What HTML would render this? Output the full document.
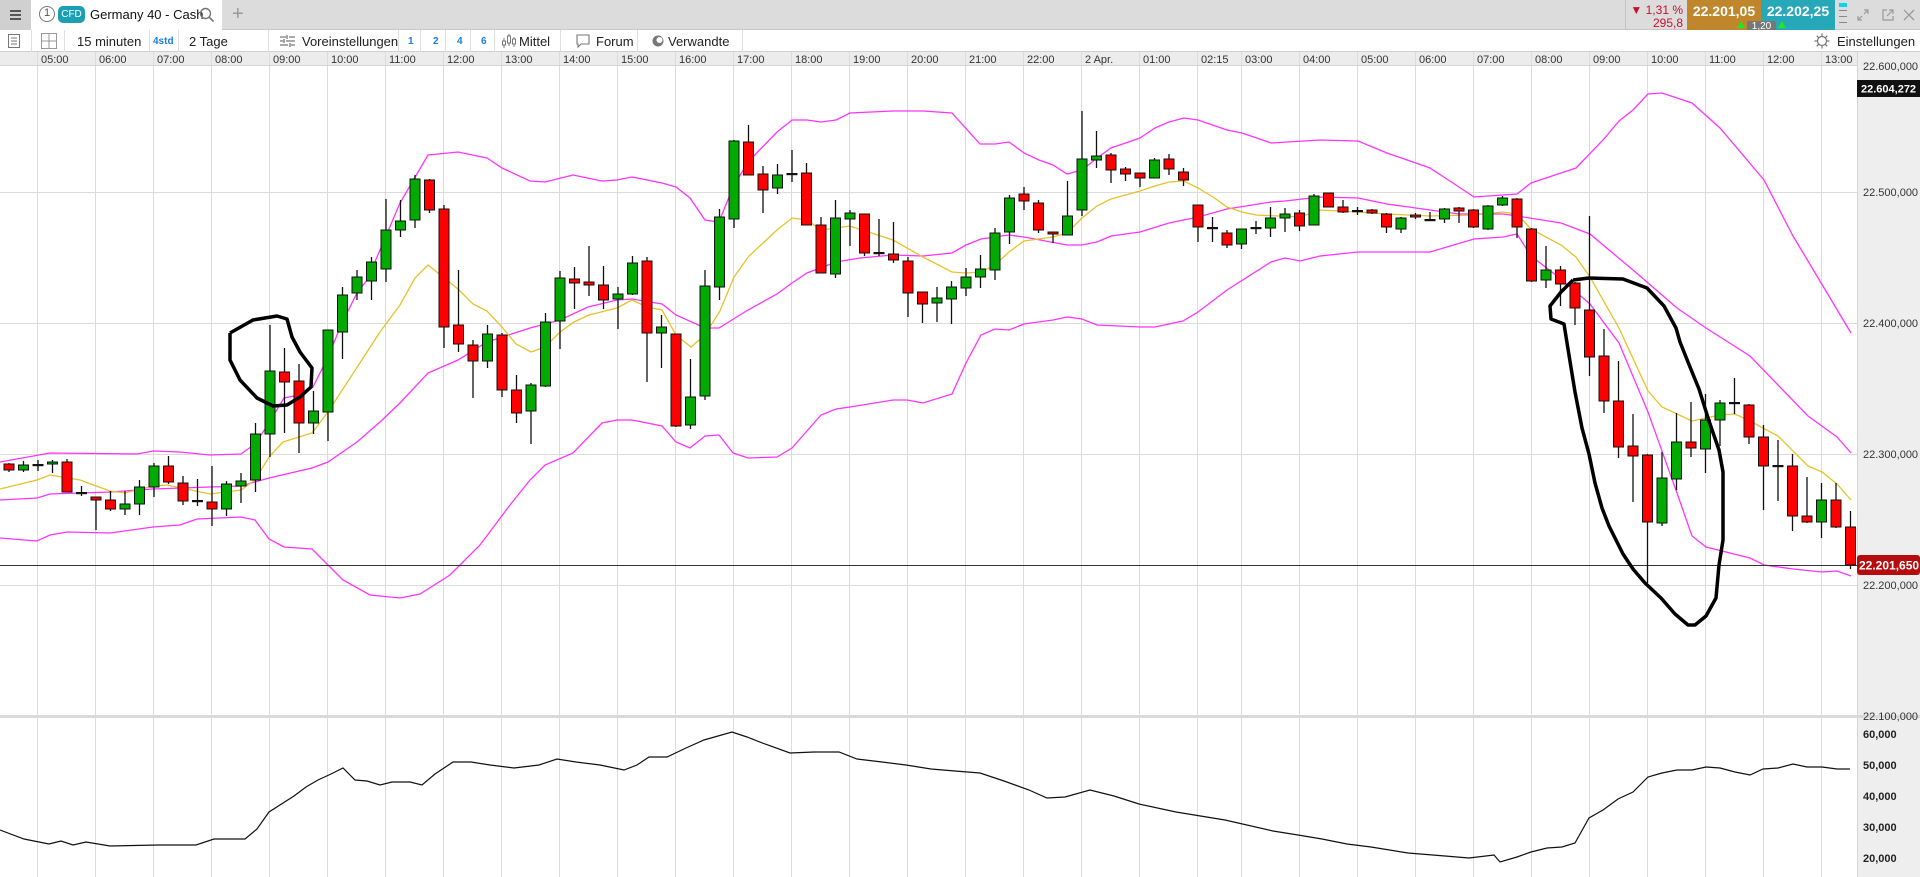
<!DOCTYPE html>
<html><head><meta charset="utf-8">
<style>
*{margin:0;padding:0;box-sizing:border-box}
body{width:1920px;height:877px;overflow:hidden;background:#fff;font-family:"Liberation Sans",Arial,sans-serif;color:#222;position:relative}
#tabbar{position:absolute;left:0;top:0;width:1920px;height:30px;background:#dcdcdc;border-bottom:1px solid #c8c8c8}
#ham{position:absolute;left:0;top:0;width:31px;height:30px;background:#d0d0d0}
#ham i{position:absolute;left:10px;width:11px;height:2px;background:#555}
#tab{position:absolute;left:31px;top:0;width:191px;height:31px;background:#fff}
.t{position:absolute;white-space:nowrap}
#toolbar{position:absolute;left:0;top:30px;width:1920px;height:22px;background:#fff;border-bottom:1px solid #d0d0d0}
.sep{position:absolute;top:30px;width:1px;height:22px;background:#dedede}
svg{position:absolute;left:0;top:0}
</style></head><body>
<svg id="s" width="1920" height="877" viewBox="0 0 1920 877"></svg>

<div id="tabbar">
 <div id="ham"><i style="top:10px"></i><i style="top:14px"></i><i style="top:18px"></i></div>
 <div id="tab">
  <div class="t" style="left:8px;top:6px;width:16px;height:16px;border:1.5px solid #777;border-radius:50%;font-size:11px;line-height:13px;text-align:center;color:#555">1</div>
  <div class="t" style="left:27px;top:6px;width:27px;height:17px;background:#1b9fb2;border-radius:5px;color:#fff;font-size:10px;line-height:17px;text-align:center">CFD</div>
  <div class="t" style="left:59px;top:7px;font-size:13px;color:#111">Germany 40 - Cash</div>
  <svg style="left:168px;top:7px" width="16" height="16" viewBox="0 0 16 16"><circle cx="6.5" cy="6.5" r="5" fill="none" stroke="#777" stroke-width="1.4"/><line x1="10" y1="10" x2="14.5" y2="14.5" stroke="#777" stroke-width="1.6"/></svg>
 </div>
 <div class="t" style="left:232px;top:3px;font-size:20px;color:#999">+</div>
 <div class="t" style="left:1625px;top:0;width:1px;height:30px;background:#c4c4c4"></div>
 <div class="t" style="left:1626px;top:3px;width:57px;text-align:right;font-size:12px;color:#c8102e">▼ 1,31 %</div>
 <div class="t" style="left:1626px;top:16px;width:57px;text-align:right;font-size:12px;color:#c8102e">295,8</div>
 <div class="t" style="left:1687px;top:0;width:74px;height:30px;background:#c0862b;color:#fff;font-weight:bold;font-size:14px;text-align:center;line-height:22px">22.201,05</div>
 <div class="t" style="left:1761px;top:0;width:74px;height:30px;background:#26a8b9;color:#fff;font-weight:bold;font-size:14px;text-align:center;line-height:22px">22.202,25</div>
 <div class="t" style="left:1737px;top:21px;width:0;height:0;border-left:4px solid transparent;border-right:4px solid transparent;border-bottom:7px solid #1ee81e"></div>
 <div class="t" style="left:1778px;top:21px;width:0;height:0;border-left:4px solid transparent;border-right:4px solid transparent;border-bottom:7px solid #1ee81e"></div>
 <div class="t" style="left:1747px;top:21px;width:29px;height:11px;background:#777;border-radius:2px;color:#fff;font-size:10px;text-align:center;line-height:12px">1,20</div>
 <div class="t" style="left:1839px;top:3px;width:8px;height:4px;background:#00d8f0"></div>
 <div class="t" style="left:1839px;top:10px;width:8px;height:1px;background:#888"></div>
 <div class="t" style="left:1839px;top:16px;width:8px;height:1px;background:#888"></div>
 <div class="t" style="left:1839px;top:22px;width:8px;height:1px;background:#888"></div>
 <svg style="left:1856px;top:8px" width="14" height="14" viewBox="0 0 14 14" fill="none" stroke="#999" stroke-width="1.2"><path d="M8 2h4v4M12 2L8 6M6 12H2V8M2 12l4-4"/></svg>
 <svg style="left:1881px;top:8px" width="14" height="14" viewBox="0 0 14 14" fill="none" stroke="#999" stroke-width="1.2"><path d="M6 2H2v10h10V8M8 2h4v4M12 2L6 8"/></svg>
 <svg style="left:1902px;top:8px" width="14" height="14" viewBox="0 0 14 14" fill="none" stroke="#999" stroke-width="1.3"><path d="M2 2l10 10M12 2L2 12"/></svg>
</div>

<div id="toolbar"></div>
<div class="sep" style="left:31px"></div><div class="sep" style="left:64px"></div><div class="sep" style="left:149px"></div><div class="sep" style="left:178px"></div><div class="sep" style="left:268px"></div><div class="sep" style="left:398px"></div><div class="sep" style="left:420px"></div><div class="sep" style="left:445px"></div><div class="sep" style="left:470px"></div><div class="sep" style="left:494px"></div><div class="sep" style="left:560px"></div><div class="sep" style="left:637px"></div><div class="sep" style="left:742px"></div>
<svg style="left:7px;top:34px" width="14" height="14" viewBox="0 0 14 14" fill="none" stroke="#777" stroke-width="1"><rect x="1.5" y="0.5" width="11" height="13"/><path d="M4 4h6M4 7h6M4 10h6"/></svg>
<svg style="left:41px;top:33px" width="16" height="16" viewBox="0 0 16 16" fill="none" stroke="#999" stroke-width="1"><rect x="0.5" y="0.5" width="15" height="15"/><path d="M8 0v16M0 8h16"/></svg>
<div class="t" style="left:77px;top:34px;font-size:13px">15 minuten</div>
<div class="t" style="left:153px;top:36px;font-size:10px;color:#1a7fe0;font-weight:bold">4std</div>
<div class="t" style="left:189px;top:34px;font-size:13px">2 Tage</div>
<svg style="left:280px;top:34px" width="15" height="14" viewBox="0 0 15 14" fill="none" stroke="#777" stroke-width="1.3"><path d="M0 3h6M9 3h6M0 7h3M6 7h9M0 11h8M11 11h4M7 1v4M4 5v4M10 9v4"/></svg>
<div class="t" style="left:302px;top:34px;font-size:13px">Voreinstellungen</div>
<div class="t" style="left:408px;top:36px;font-size:10px;color:#1a7fe0;font-weight:bold">1</div>
<div class="t" style="left:433px;top:36px;font-size:10px;color:#1a7fe0;font-weight:bold">2</div>
<div class="t" style="left:457px;top:36px;font-size:10px;color:#1a7fe0;font-weight:bold">4</div>
<div class="t" style="left:481px;top:36px;font-size:10px;color:#1a7fe0;font-weight:bold">6</div>
<svg style="left:502px;top:33px" width="14" height="16" viewBox="0 0 14 16" fill="none" stroke="#777" stroke-width="1"><path d="M2 5v10M7 1v12M12 4v10"/><rect x="0.5" y="8" width="3" height="4" fill="#fff"/><rect x="5.5" y="3" width="3" height="7" fill="#fff"/><rect x="10.5" y="6" width="3" height="5" fill="#fff"/></svg>
<div class="t" style="left:519px;top:34px;font-size:13px">Mittel</div>
<svg style="left:576px;top:34px" width="14" height="15" viewBox="0 0 14 15" fill="none" stroke="#777" stroke-width="1.1"><path d="M1 1h12v9H5l-3 3v-3H1z"/></svg>
<div class="t" style="left:596px;top:34px;font-size:13px">Forum</div>
<svg style="left:652px;top:35px" width="12" height="12" viewBox="0 0 12 12"><circle cx="6" cy="6" r="5.5" fill="#777"/><circle cx="7.5" cy="5" r="3" fill="#fff"/></svg>
<div class="t" style="left:668px;top:34px;font-size:13px">Verwandte</div>
<svg style="left:1814px;top:33px" width="16" height="16" viewBox="0 0 16 16" fill="none" stroke="#777" stroke-width="1.2"><circle cx="8" cy="8" r="4.5"/><path d="M8 0.5v3M8 12.5v3M0.5 8h3M12.5 8h3M2.7 2.7l2.1 2.1M11.2 11.2l2.1 2.1M2.7 13.3l2.1-2.1M11.2 4.8l2.1-2.1"/></svg>
<div class="t" style="left:1837px;top:34px;font-size:13px">Einstellungen</div>

<script>
var S=document.getElementById('s'),h='';
function L(a){return a.map(function(p){return p.join(',')}).join(' ')}
h+='<rect x="0" y="52" width="1857" height="14" fill="#ececec"/>';
h+='<rect x="1857" y="52" width="63" height="825" fill="#eeeeee"/>';
h+='<line x1="1857.5" y1="52" x2="1857.5" y2="877" stroke="#d6d6d6"/>';
var gx=[],labs=['05:00','06:00','07:00','08:00','09:00','10:00','11:00','12:00','13:00','14:00','15:00','16:00','17:00','18:00','19:00','20:00','21:00','22:00','2 Apr.','01:00','02:15','03:00','04:00','05:00','06:00','07:00','08:00','09:00','10:00','11:00','12:00','13:00'];
for(var k=0;k<=18;k++)gx.push(37+58*k);
gx.push(1139,1197);
for(var k=0;k<=10;k++)gx.push(1241+58*k);
gx.forEach(function(x,i){
 h+='<line x1="'+(x+.5)+'" y1="52" x2="'+(x+.5)+'" y2="877" stroke="#dcdcdc"/>';
 h+='<text x="'+(x+4)+'" y="63" font-size="11" fill="#333">'+labs[i]+'</text>';
});
h+='<line x1="0" y1="65.5" x2="1857" y2="65.5" stroke="#d4d4d4"/>';
[192,323,454,585].forEach(function(y){h+='<line x1="0" y1="'+(y+.5)+'" x2="1857" y2="'+(y+.5)+'" stroke="#dcdcdc"/>'});
h+='<rect x="0" y="715" width="1920" height="3" fill="#dadada"/>';
var pl=[['22.600,000',66],['22.500,000',192],['22.400,000',323],['22.300,000',454],['22.200,000',585],['22.100,000',716]];
pl.forEach(function(p){h+='<text x="1863" y="'+(p[1]+4)+'" font-size="11" fill="#333">'+p[0]+'</text>'});
var up=[[0,462],[50,453],[137,454],[153,451],[180,452],[210,455],[241,454],[255,444],[269,423],[284,398],[299,395],[313,387],[328,357],[342,323],[357,293],[367,280],[380,250],[400,203],[428,155],[458,152],[487,158],[502,168],[530,181],[545,182],[573,175],[602,181],[617,180],[632,177],[662,183],[676,187],[690,198],[705,220],[719,222],[733,187],[748,162],[777,132],[792,120],[807,120],[821,122],[836,120],[850,113],[893,111],[923,111],[952,113],[980,144],[995,144],[1009,142],[1024,153],[1039,160],[1053,165],[1067,174],[1082,170],[1097,158],[1111,148],[1140,138],[1155,128],[1169,122],[1184,118],[1198,120],[1227,130],[1242,133],[1271,143],[1320,140],[1358,141],[1387,153],[1430,168],[1459,187],[1474,197],[1517,194],[1531,183],[1561,173],[1576,168],[1604,139],[1619,121],[1633,110],[1648,94],[1662,93],[1692,103],[1720,128],[1764,180],[1793,236],[1808,261],[1851,333]];
var md=[[0,500],[37,498],[50,494],[110,492],[153,489],[210,487],[241,486],[269,478],[312,468],[328,462],[357,442],[380,422],[400,403],[428,373],[458,360],[487,342],[530,328],[560,320],[588,307],[617,300],[632,299],[662,304],[676,315],[705,328],[719,328],[748,310],[777,294],[792,283],[807,273],[836,262],[860,258],[893,255],[923,256],[952,253],[966,245],[981,239],[1009,235],[1024,237],[1067,245],[1082,245],[1097,242],[1111,236],[1140,232],[1169,223],[1198,217],[1227,209],[1271,202],[1285,201],[1320,197],[1358,198],[1387,204],[1430,210],[1459,214],[1503,214],[1517,216],[1561,223],[1590,234],[1633,270],[1677,308],[1706,328],[1750,356],[1778,385],[1808,416],[1837,437],[1851,453]];
var lo=[[0,538],[37,541],[50,535],[67,532],[110,533],[153,527],[180,525],[197,519],[241,517],[255,520],[269,539],[284,547],[312,549],[328,565],[343,580],[370,595],[400,598],[420,594],[450,575],[480,545],[510,505],[530,480],[545,465],[573,453],[602,423],[617,420],[632,420],[662,426],[676,442],[690,448],[705,436],[719,435],[733,453],[748,458],[777,457],[792,448],[821,415],[836,409],[850,407],[893,400],[907,400],[923,403],[952,394],[966,363],[981,335],[995,329],[1009,330],[1024,324],[1053,320],[1067,317],[1082,319],[1097,325],[1140,327],[1155,327],[1183,321],[1198,312],[1227,290],[1271,262],[1285,258],[1300,261],[1320,256],[1358,252],[1430,252],[1474,239],[1503,237],[1517,234],[1531,256],[1561,279],[1590,304],[1619,343],[1648,412],[1677,493],[1692,536],[1706,547],[1750,558],[1764,565],[1793,569],[1822,572],[1837,571],[1851,576]];
var ye=[[0,489],[37,480],[50,475],[80,480],[110,491],[125,493],[153,486],[167,485],[210,494],[241,490],[255,480],[269,457],[283,442],[312,433],[328,412],[380,332],[400,305],[415,278],[428,265],[458,289],[473,304],[487,311],[502,327],[516,344],[531,352],[545,347],[560,332],[574,322],[589,315],[617,308],[632,300],[647,307],[662,310],[676,335],[691,347],[705,335],[720,311],[734,277],[749,256],[777,230],[792,218],[807,220],[821,230],[850,226],[893,240],[923,257],[952,272],[966,273],[981,272],[995,265],[1009,252],[1024,241],[1053,237],[1067,233],[1082,218],[1097,206],[1111,199],[1140,191],[1155,186],[1169,182],[1184,181],[1198,188],[1213,197],[1227,207],[1242,212],[1256,215],[1300,217],[1320,210],[1358,212],[1387,214],[1430,216],[1474,215],[1503,212],[1517,214],[1531,229],[1561,245],[1576,257],[1590,277],[1619,328],[1648,391],[1662,407],[1692,421],[1720,415],[1735,414],[1750,421],[1778,436],[1808,466],[1822,472],[1837,484],[1851,500]];
h+='<polyline points="'+L(up)+'" fill="none" stroke="#ff33ff" stroke-width="1.3"/>';
h+='<polyline points="'+L(md)+'" fill="none" stroke="#ff33ff" stroke-width="1.3"/>';
h+='<polyline points="'+L(lo)+'" fill="none" stroke="#ff33ff" stroke-width="1.3"/>';
h+='<polyline points="'+L(ye)+'" fill="none" stroke="#e6c229" stroke-width="1.3"/>';
h+='<line x1="0" y1="565.5" x2="1857" y2="565.5" stroke="#333" stroke-width="1"/>';
var C=[[464,470,463,472],[470,465,461,472],[465,465,460,471],[464,462,460,473],[462,492,459,492],[493,493,486,496],[497,500,497,530],[500,509,491,511],[509,504,491,515],[504,487,480,515],[487,466,463,497],[466,482,456,484],[483,501,476,505],[501,501,479,506],[502,509,466,526],[509,484,481,516],[486,481,473,503],[480,434,423,492],[434,371,325,457],[372,382,348,433],[381,423,364,453],[423,411,391,434],[412,330,330,441],[332,295,287,359],[293,277,270,300],[281,262,257,300],[269,230,199,282],[230,221,200,237],[220,179,175,228],[180,210,179,213],[209,327,205,348],[325,344,270,352],[345,361,340,398],[361,334,325,368],[335,390,333,397],[390,413,375,423],[411,385,383,444],[386,322,313,387],[321,278,271,349],[279,283,267,309],[282,285,246,296],[285,300,266,309],[299,294,287,329],[294,263,256,295],[261,333,257,382],[333,327,315,368],[334,426,334,427],[425,397,359,429],[396,286,270,400],[287,217,209,300],[219,141,140,228],[142,175,125,175],[174,190,166,213],[188,175,164,194],[174,174,150,182],[173,225,163,225],[225,273,217,273],[274,218,200,278],[219,213,210,246],[214,253,214,256],[253,253,219,256],[254,260,222,263],[261,293,257,317],[292,304,292,323],[303,298,287,322],[299,287,281,324],[288,277,268,296],[277,269,255,288],[270,233,228,280],[232,198,195,244],[194,201,187,210],[203,230,200,233],[232,234,232,243],[235,216,181,235],[210,159,111,216],[160,156,131,168],[155,170,153,183],[169,174,167,181],[173,178,173,187],[178,160,158,178],[159,169,154,175],[172,180,168,186],[205,227,205,242],[228,228,217,242],[233,245,230,248],[244,229,229,249],[228,228,221,234],[228,218,207,237],[218,214,208,232],[213,226,210,231],[225,196,194,225],[193,207,193,207],[207,212,200,213],[211,211,207,215],[210,213,209,214],[214,227,213,233],[229,218,217,233],[215,217,213,219],[220,220,212,221],[219,209,208,223],[208,211,207,223],[210,227,209,228],[229,206,205,230],[205,198,196,206],[199,227,198,238],[229,281,228,282],[280,270,246,288],[270,284,266,306],[283,308,282,325],[310,357,216,376],[356,401,329,413],[401,447,361,458],[446,456,414,502],[455,522,454,583],[523,478,452,526],[479,442,413,490],[442,448,402,457],[449,420,394,473],[420,403,400,446],[403,403,378,414],[405,437,404,444],[437,466,425,510],[466,466,440,501],[466,516,454,531],[516,522,477,523],[522,500,483,538],[500,527,483,528],[527,565,511,569]];
C.forEach(function(c,i){
 var x=9+14.5*i,o=c[0],cl=c[1],hi=c[2],lw=c[3];
 h+='<line x1="'+x+'" y1="'+hi+'" x2="'+x+'" y2="'+lw+'" stroke="#111" stroke-width="1.3"/>';
 if(Math.abs(o-cl)<1.5){h+='<rect x="'+(x-5.5)+'" y="'+(o-1)+'" width="11" height="2.2" fill="#111"/>';}
 else{var t=Math.min(o,cl),b=Math.max(o,cl),col=cl>o?'#ff0000':'#00aa00';
 h+='<rect x="'+(x-5)+'" y="'+t+'" width="10" height="'+(b-t)+'" fill="'+col+'" stroke="#111" stroke-width="1"/>';}
});
var c1=[[230,333],[253,320],[277,316],[287,319],[292,337],[300,352],[312,368],[311,387],[300,397],[287,405],[273,406],[257,398],[240,380],[230,360],[230,333]];
var c2=[[1573,280],[1589,278],[1623,279],[1647,288],[1664,306],[1676,328],[1680,342],[1690,367],[1699,389],[1709,421],[1719,450],[1723,472],[1723,540],[1719,565],[1716,598],[1706,616],[1695,625],[1688,625],[1675,614],[1661,598],[1645,583],[1633,569],[1623,554],[1609,526],[1602,508],[1595,483],[1589,454],[1582,428],[1575,392],[1568,349],[1564,324],[1551,319],[1550,306],[1561,292],[1573,280]];
h+='<polyline points="'+L(c1)+'" fill="none" stroke="#000" stroke-width="3.5" stroke-linejoin="round"/>';
h+='<polyline points="'+L(c2)+'" fill="none" stroke="#000" stroke-width="3.5" stroke-linejoin="round"/>';
h+='<rect x="1857" y="80" width="63" height="17" fill="#111"/><text x="1861" y="92.5" font-size="11" font-weight="bold" fill="#fff">22.604,272</text>';
h+='<rect x="1857" y="555" width="63" height="20" rx="3" fill="#b50d0d"/><text x="1859" y="569.5" font-size="12" font-weight="bold" fill="#fff">22.201,650</text>';
var ind=[[0,678],[20,685],[40,689],[50,687],[60,690],[70,688],[90,691],[130,690],[160,690],[175,685],[200,685],[210,677],[220,663],[240,650],[250,643],[260,637],[270,632],[280,627],[290,637],[300,638],[310,641],[320,639],[335,639],[345,641],[355,632],[370,622],[385,622],[400,625],[420,627],[440,625],[455,620],[470,622],[490,625],[510,629],[520,625],[530,618],[545,618],[560,611],[575,604],[598,598],[610,602],[625,608],[645,615],[665,614],[685,614],[700,620],[720,622],[740,625],[760,628],[780,630],[800,631],[820,638],[840,645],[855,652],[870,651],[890,645],[910,650],[930,657],[960,663],[1000,670],[1040,679],[1060,682],[1080,685],[1100,689],[1120,692],[1150,697],[1180,699],[1200,701],[1220,698]].map(function(p){return [Math.round(p[0]*1.2245),Math.round(p[1]*1.2245)]});
ind=ind.concat([[1500,862],[1517,857],[1531,852],[1547,848],[1562,847],[1575,843],[1589,818],[1603,810],[1618,799],[1633,792],[1648,777],[1662,773],[1677,770],[1692,770],[1706,767],[1720,768],[1735,772],[1750,775],[1763,769],[1778,768],[1793,764],[1807,767],[1822,767],[1837,769],[1850,769]]);
h+='<polyline points="'+L(ind)+'" fill="none" stroke="#111" stroke-width="1.2"/>';
[['60,000',734],['50,000',765],['40,000',796],['30,000',827],['20,000',858]].forEach(function(p){h+='<text x="1863" y="'+(p[1]+4)+'" font-size="11" font-weight="bold" fill="#222">'+p[0]+'</text>'});
S.innerHTML=h;
</script>
</body></html>
